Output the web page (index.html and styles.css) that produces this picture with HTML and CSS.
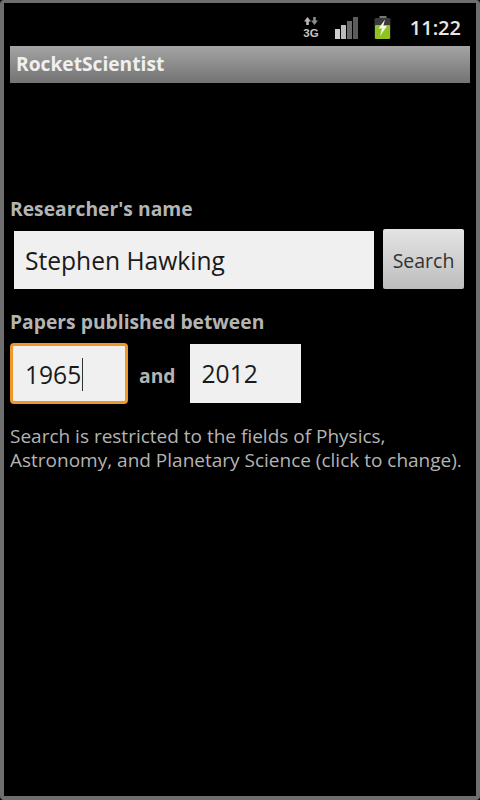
FILE: index.html
```html
<!DOCTYPE html>
<html lang="en">
<head>
<meta charset="utf-8">
<title>RocketScientist</title>
<link rel="stylesheet" href="styles.css">
</head>
<body>
<div class="screen">
  <div class="status">
    <svg class="ic-3g" width="16" height="22" viewBox="0 0 16 22">
      <path d="M4.500 0 L8 4.500 H5.800 V8 H3.200 V4.500 H1 Z" fill="#b8b8b8"/>
      <path d="M11.500 8 L8 3.500 H10.200 V0 H12.800 V3.500 H15 Z" fill="#8c8c8c"/>
      <text x="8" y="19.500" class="t3g">3G</text>
    </svg>
    <svg class="ic-signal" width="23" height="22" viewBox="0 0 23 22">
      <rect x="0" y="12" width="5" height="10" fill="#cfcfcf"/>
      <rect x="6" y="8" width="5" height="14" fill="#bcbcbc"/>
      <rect x="12" y="4" width="5" height="18" fill="#6a6a6a"/>
      <rect x="18" y="0" width="5" height="22" fill="#5c5c5c"/>
    </svg>
    <svg class="ic-batt" width="18" height="23" viewBox="0 0 18 23">
      <rect x="5.500" y="0" width="7" height="3" fill="#777"/>
      <rect x="0.500" y="2" width="16" height="21" rx="1.500" fill="#3a3a3a"/>
      <rect x="1" y="9" width="15" height="14" rx="1" fill="#8fc31f"/>
      <path d="M11 3.500 L4.500 12.500 H8 L6 20 L13 10 H9.300 Z" fill="#f4f8e4"/>
    </svg>
    <span class="clock">11:22</span>
  </div>
  <div class="titlebar">RocketScientist</div>
  <main class="content">
    <div class="label">Researcher's name</div>
    <div class="row row-name">
      <div class="field field-name">Stephen Hawking</div>
      <div class="btn">Search</div>
    </div>
    <div class="label label-2">Papers published between</div>
    <div class="row row-years">
      <div class="field field-focus"><span class="caret-text">1965</span></div>
      <span class="and">and</span>
      <div class="field field-year">2012</div>
    </div>
    <p class="note">Search is restricted to the fields of Physics,<br>Astronomy, and Planetary Science (click to change).</p>
  </main>
</div>
</body>
</html>
```
FILE: styles.css
```css
* { box-sizing: border-box; }
html, body { margin: 0; padding: 0; background: #000; }
body { width: 480px; height: 800px; overflow: hidden; font-family: "Open Sans", "Noto Sans", sans-serif; }
.screen {
  width: 480px; height: 800px; background: #000;
  border-style: solid; border-color: #6e6e6e;
  border-width: 3px 4px 4px 4px;
  border-radius: 4px;
  display: flex; flex-direction: column;
}
.status { height: 43px; display: flex; align-items: flex-end; justify-content: flex-end; padding: 0 15px 7px 0; flex: none; }
.ic-3g { margin-right: 16px; }
.t3g { font: bold 11.500px "Liberation Sans", sans-serif; fill: #c4c4c4; text-anchor: middle; }
.ic-signal { margin-right: 16px; }
.ic-batt { margin-right: 18px; }
.clock { font-size: 20px; font-weight: 600; color: #e6e6e6; line-height: 20px; margin-bottom: 1px; }
.titlebar {
  flex: none; height: 37px; margin: 0 6px; padding-left: 6px;
  background: linear-gradient(#a4a4a4, #737373);
  color: #f0f0f0; font-size: 19.200px; font-weight: 700; line-height: 36px;
}
.content { flex: 1; padding: 0 6px; }
.label { margin-top: 113px; color: #b4b4b4; font-size: 19.300px; font-weight: 700; line-height: 26px; }
.label-2 { margin-top: 20px; }
.row { display: flex; }
.row-name { margin-top: 7px; gap: 9px; padding-left: 4px; align-items: flex-end; }
.field { background: #f0f0f0; color: #1a1a1a; font-size: 24.600px; height: 58px; line-height: 59px; padding-left: 11px; }
.field-name { width: 360px; }
.btn { width: 81px; height: 60px; background: linear-gradient(#e4e4e4, #bdbdbd); color: #333; font-size: 19.500px; line-height: 63px; text-align: center; border-radius: 2px; }
.row-years { margin-top: 8px; align-items: center; }
.field-focus { width: 118px; height: 61px; line-height: 58px; border: 3px solid #f0962a; border-radius: 4px; padding-left: 12px; }
.caret-text { border-right: 1px solid #333; padding-right: 1px; }
.and { color: #b4b4b4; font-size: 19.300px; font-weight: 700; margin-left: 11px; margin-top: 3px; }
.field-year { width: 111px; height: 59px; line-height: 60px; margin-left: 14px; padding-left: 12px; }
.note { margin: 20px 0 0; color: #b4b4b4; font-size: 19px; line-height: 24px; }
```
